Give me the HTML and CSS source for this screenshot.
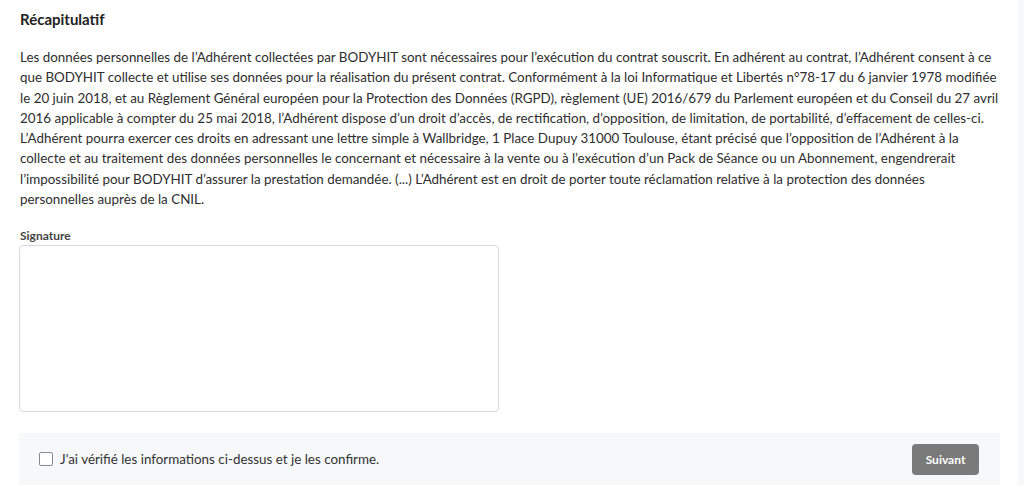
FILE: index.html
```html
<!DOCTYPE html>
<html lang="fr">
<head>
<meta charset="utf-8">
<link rel="stylesheet" href="styles.css">
</head>
<body>
<div class="page">
  <main class="main">
    <h2 class="title">Récapitulatif</h2>
    <p class="legal">Les données personnelles de l’Adhérent collectées par BODYHIT sont nécessaires pour l’exécution du contrat souscrit. En adhérent au contrat, l’Adhérent consent à ce<br>que BODYHIT collecte et utilise ses données pour la réalisation du présent contrat. Conformément à la loi Informatique et Libertés n°78-17 du 6 janvier 1978 modifiée<br>le 20 juin 2018, et au Règlement Général européen pour la Protection des Données (RGPD), règlement (UE) 2016/679 du Parlement européen et du Conseil du 27 avril<br>2016 applicable à compter du 25 mai 2018, l’Adhérent dispose d’un droit d’accès, de rectification, d’opposition, de limitation, de portabilité, d’effacement de celles-ci.<br>L’Adhérent pourra exercer ces droits en adressant une lettre simple à Wallbridge, 1 Place Dupuy 31000 Toulouse, étant précisé que l’opposition de l’Adhérent à la<br>collecte et au traitement des données personnelles le concernant et nécessaire à la vente ou à l’exécution d’un Pack de Séance ou un Abonnement, engendrerait<br>l’impossibilité pour BODYHIT d’assurer la prestation demandée. (...) L’Adhérent est en droit de porter toute réclamation relative à la protection des données<br>personnelles auprès de la CNIL.</p>
    <label class="sig-label" for="sig">Signature</label>
    <textarea id="sig" class="sig-box"></textarea>
    <div class="footer">
      <label class="confirm">
        <span class="checkbox"></span>
        <span>J'ai vérifié les informations ci-dessus et je les confirme.</span>
      </label>
      <button class="btn" type="button">Suivant</button>
    </div>
  </main>
  <aside class="edge"></aside>
</div>
</body>
</html>
```
FILE: styles.css
```css
html, body {
  margin: 0;
  padding: 0;
  background: #ffffff;
}
body {
  font-family: Lato, "Noto Sans", sans-serif;
  color: #2b2b2b;
}
.page {
  display: flex;
  height: 485px;
  overflow: hidden;
}
.main {
  flex: 1;
  padding: 0 18px 0 19px;
  display: flex;
  flex-direction: column;
  align-items: flex-start;
}
.edge {
  width: 6px;
  background: #f7f8fa;
}
.title {
  margin: 9px 0 0 1px;
  font-size: 15px;
  font-weight: 700;
  line-height: 20px;
  color: #222;
}
.legal {
  margin: 18px 0 0 1px;
  font-size: 13.4px;
  line-height: 20.25px;
  white-space: nowrap;
  color: #2e2e2e;
}
.sig-label {
  margin: 20px 0 0 1px;
  font-size: 12px;
  font-weight: 700;
  line-height: 14px;
  color: #444;
}
.sig-box {
  margin-top: 2px;
  width: 480px;
  height: 167px;
  box-sizing: border-box;
  border: 1px solid #d6d9de;
  border-radius: 4px;
  resize: none;
  background: #fff;
}
.footer {
  margin-top: 21px;
  align-self: stretch;
  height: 52px;
  background: #f7f8fa;
  display: flex;
  align-items: center;
  justify-content: space-between;
  padding: 0 21px 0 20px;
  box-sizing: border-box;
}
.confirm {
  display: flex;
  align-items: center;
  gap: 7px;
  font-size: 13.4px;
  color: #333;
}
.checkbox {
  width: 12px;
  height: 12px;
  border: 1px solid #8a8a8a;
  border-radius: 2px;
  background: #fff;
}
.btn {
  width: 67px;
  height: 31px;
  border: none;
  border-radius: 4px;
  background: #7a7a7a;
  color: #fff;
  font-family: Lato, "Noto Sans", sans-serif;
  font-size: 12px;
  font-weight: 700;
}
```
